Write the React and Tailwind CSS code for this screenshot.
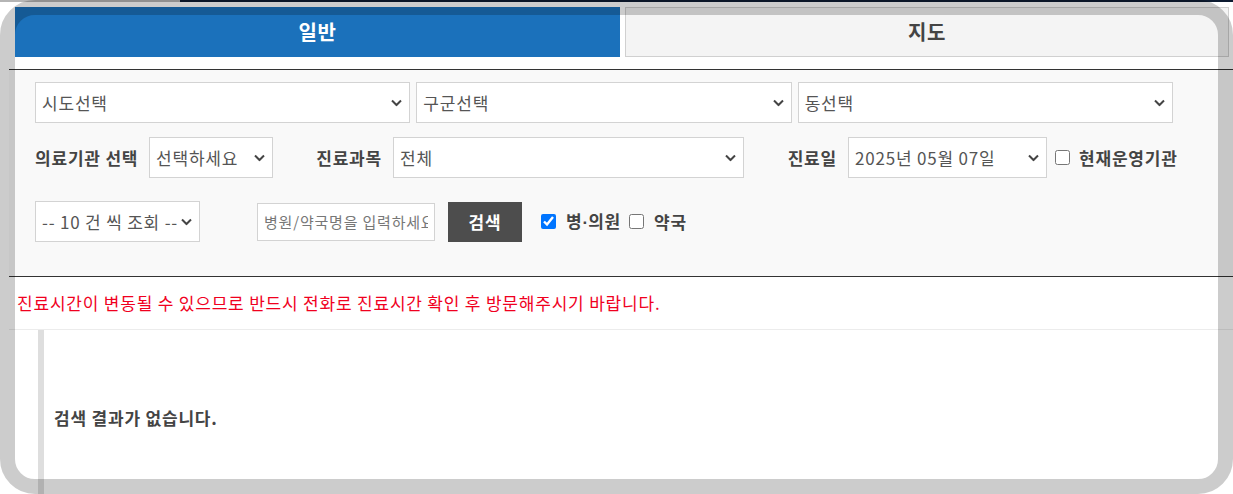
import { useState } from "react";

function Chevron() {
  return (
    <svg width="11" height="7" viewBox="0 0 11 7" className="pointer-events-none absolute right-[8px] top-1/2 -translate-y-1/2">
      <polyline points="1,1 5.5,5.5 10,1" fill="none" stroke="#444" strokeWidth="2" />
    </svg>
  );
}

function SelectBox({ className, value, options }) {
  return (
    <div className={`relative h-[41px] ${className}`}>
      <select
        defaultValue={value}
        className="h-full w-full appearance-none border border-[#d3d3d3] bg-white pl-[6px] pr-[22px] text-[17px] tracking-[0.8px] text-[#555] outline-none"
      >
        {options.map((option) => (
          <option key={option}>{option}</option>
        ))}
      </select>
      <Chevron />
    </div>
  );
}

export default function App() {
  const [hospital, setHospital] = useState(true);
  const [pharmacy, setPharmacy] = useState(false);
  const [openNow, setOpenNow] = useState(false);

  return (
    <div className="relative h-[494px] w-[1233px] overflow-hidden bg-white font-['Noto_Sans_CJK_KR','Noto_Sans',sans-serif]">
      <div className="flex h-[2px]">
        <div className="w-[180px] bg-[#b5b5b5]" />
        <div className="flex-1 bg-[#0d1b31]" />
      </div>

      <div className="pl-[9px] pt-[5px]">
        <div className="ml-[6px] flex h-[50px] gap-[5px]">
          <button type="button" className="w-[605px] bg-[#1b71bb] text-[20px] font-bold tracking-[0.5px] text-white">
            일반
          </button>
          <button type="button" className="w-[604px] border border-[#d0d0d0] bg-[#f4f4f4] text-[20px] font-bold tracking-[0.5px] text-[#444]">
            지도
          </button>
        </div>

        <div className="mt-[12px] border-t border-b border-[#333] bg-[#f9f9f9] pb-[34px] pl-[26px] pt-[12px] text-[17px] tracking-[0.8px] text-[#444]">
          <div className="grid w-[1138px] grid-cols-3 gap-[6px]">
            <SelectBox value="시도선택" options={["시도선택"]} />
            <SelectBox value="구군선택" options={["구군선택"]} />
            <SelectBox value="동선택" options={["동선택"]} />
          </div>

          <div className="mt-[14px] flex items-center">
            <span className="w-[114px] whitespace-nowrap font-bold">의료기관 선택</span>
            <SelectBox className="w-[124px]" value="선택하세요" options={["선택하세요"]} />
            <span className="w-[120px] whitespace-nowrap pr-[11px] text-right font-bold">진료과목</span>
            <SelectBox className="w-[351px]" value="전체" options={["전체"]} />
            <span className="w-[104px] whitespace-nowrap pr-[11px] text-right font-bold">진료일</span>
            <SelectBox className="w-[199px]" value="2025년 05월 07일" options={["2025년 05월 07일"]} />
            <input
              type="checkbox"
              checked={openNow}
              onChange={(event) => setOpenNow(event.target.checked)}
              className="ml-[8px] h-[15px] w-[15px]"
            />
            <span className="ml-[9px] whitespace-nowrap font-bold">현재운영기관</span>
          </div>

          <div className="mt-[23px] flex items-center">
            <SelectBox className="w-[165px]" value="-- 10 건 씩 조회 --" options={["-- 10 건 씩 조회 --"]} />
            <input
              type="text"
              placeholder="병원/약국명을 입력하세요"
              className="ml-[57px] h-[38px] w-[178px] border border-[#d3d3d3] bg-white px-[6px] text-[15px] tracking-[0.8px] text-[#444] outline-none placeholder:text-[#777]"
            />
            <button type="button" className="ml-[13px] h-[40px] w-[74px] bg-[#4d4d4d] font-bold text-white">
              검색
            </button>
            <input
              type="checkbox"
              checked={hospital}
              onChange={(event) => setHospital(event.target.checked)}
              className="ml-[19px] h-[15px] w-[15px]"
            />
            <span className="ml-[10px] w-[63px] whitespace-nowrap font-bold">
              병<span className="font-['Liberation_Sans'] tracking-normal">·</span>의원
            </span>
            <input
              type="checkbox"
              checked={pharmacy}
              onChange={(event) => setPharmacy(event.target.checked)}
              className="h-[15px] w-[15px]"
            />
            <span className="ml-[10px] font-bold">약국</span>
          </div>
        </div>

        <p className="flex h-[53px] items-center border-b border-[#ececec] pl-[8px] text-[17px] tracking-[0.8px] text-[#f0001e]">
          진료시간이 변동될 수 있으므로 반드시 전화로 진료시간 확인 후 방문해주시기 바랍니다.
        </p>

        <div className="ml-[29px] h-[200px] border-l-[6px] border-[#dedede] pl-[10px] pt-[75px]">
          <p className="text-[17px] font-bold tracking-[0.8px] text-[#444]">검색 결과가 없습니다.</p>
        </div>
      </div>

      <div className="pointer-events-none absolute inset-0 rounded-[35px] border-[15px] border-black/20" />
    </div>
  );
}
